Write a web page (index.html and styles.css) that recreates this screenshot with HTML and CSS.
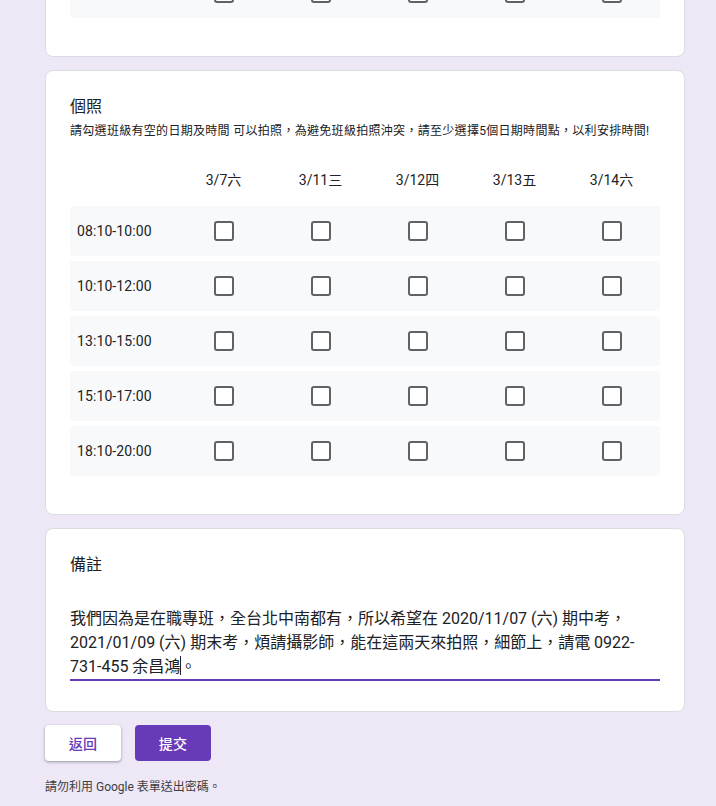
FILE: index.html
```html
<!DOCTYPE html>
<html lang="zh-Hant">
<head>
<meta charset="utf-8">
<title>表單</title>
<link rel="stylesheet" href="styles.css">
</head>
<body>
<div class="page">
  <div class="card card-prev">
    <div class="grid">
      <div class="row">
        <div class="row-label"></div>
        <div class="cell"><span class="cb"></span></div>
        <div class="cell"><span class="cb"></span></div>
        <div class="cell"><span class="cb"></span></div>
        <div class="cell"><span class="cb"></span></div>
        <div class="cell"><span class="cb"></span></div>
      </div>
    </div>
  </div>

  <div class="card">
    <div class="q-title">個照</div>
    <div class="q-desc">請勾選班級有空的日期及時間 可以拍照，為避免班級拍照沖突，請至少選擇5個日期時間點，以利安排時間!</div>
    <div class="grid">
      <div class="head">
        <div class="row-label"></div>
        <div class="col-label">3/7六</div>
        <div class="col-label">3/11三</div>
        <div class="col-label">3/12四</div>
        <div class="col-label">3/13五</div>
        <div class="col-label">3/14六</div>
      </div>
      <div class="row">
        <div class="row-label">08:10-10:00</div>
        <div class="cell"><span class="cb"></span></div>
        <div class="cell"><span class="cb"></span></div>
        <div class="cell"><span class="cb"></span></div>
        <div class="cell"><span class="cb"></span></div>
        <div class="cell"><span class="cb"></span></div>
      </div>
      <div class="row">
        <div class="row-label">10:10-12:00</div>
        <div class="cell"><span class="cb"></span></div>
        <div class="cell"><span class="cb"></span></div>
        <div class="cell"><span class="cb"></span></div>
        <div class="cell"><span class="cb"></span></div>
        <div class="cell"><span class="cb"></span></div>
      </div>
      <div class="row">
        <div class="row-label">13:10-15:00</div>
        <div class="cell"><span class="cb"></span></div>
        <div class="cell"><span class="cb"></span></div>
        <div class="cell"><span class="cb"></span></div>
        <div class="cell"><span class="cb"></span></div>
        <div class="cell"><span class="cb"></span></div>
      </div>
      <div class="row">
        <div class="row-label">15:10-17:00</div>
        <div class="cell"><span class="cb"></span></div>
        <div class="cell"><span class="cb"></span></div>
        <div class="cell"><span class="cb"></span></div>
        <div class="cell"><span class="cb"></span></div>
        <div class="cell"><span class="cb"></span></div>
      </div>
      <div class="row">
        <div class="row-label">18:10-20:00</div>
        <div class="cell"><span class="cb"></span></div>
        <div class="cell"><span class="cb"></span></div>
        <div class="cell"><span class="cb"></span></div>
        <div class="cell"><span class="cb"></span></div>
        <div class="cell"><span class="cb"></span></div>
      </div>
    </div>
  </div>

  <div class="card">
    <div class="q-title">備註</div>
    <div class="answer">我們因為是在職專班，全台北中南都有，所以希望在 2020/11/07 (六) 期中考，<br>2021/01/09 (六) 期末考，煩請攝影師，能在這兩天來拍照，細節上，請電 0922-<br>731-455 余昌鴻<span class="caret"></span>。</div>
  </div>

  <div class="actions">
    <button class="btn btn-back">返回</button>
    <button class="btn btn-submit">提交</button>
  </div>
  <div class="footer-note">請勿利用 Google 表單送出密碼。</div>
</div>
</body>
</html>
```

FILE: styles.css
```css
html, body {
  margin: 0;
  padding: 0;
  background: #ede7f6;
  font-family: Roboto, "Noto Sans CJK TC", sans-serif;
  color: #202124;
  overflow: hidden;
}

.page {
  width: 640px;
  margin-left: 45px;
}

.card {
  background: #fff;
  border: 1px solid #dadce0;
  border-radius: 8px;
  padding: 24px 24px 24px;
  margin-bottom: 13px;
}

.card-prev {
  margin-top: -57px;
}

.q-title {
  font-size: 16px;
  line-height: 24px;
  letter-spacing: 0.1px;
}

.q-desc {
  font-size: 12px;
  line-height: 18px;
  margin-top: 3px;
  letter-spacing: 0.3px;
  white-space: nowrap;
}

.grid {
  margin-bottom: 14px;
}

.head,
.row {
  display: grid;
  grid-template-columns: 105px repeat(5, 97px);
  align-items: center;
}

.head {
  padding: 28px 0 14px;
  line-height: 24px;
}

.col-label {
  text-align: center;
  font-size: 14px;
}

.row {
  height: 50px;
  background: #f8f9fa;
  border-radius: 3px;
  margin-bottom: 5px;
}

.row:last-child {
  margin-bottom: 0;
}

.row-label {
  font-size: 14px;
  padding-left: 7px;
  letter-spacing: 0.1px;
}

.cell {
  display: flex;
  justify-content: center;
  align-items: center;
  padding-bottom: 1px;
}

.cb {
  box-sizing: border-box;
  width: 20px;
  height: 20px;
  border: 2px solid #5f6368;
  border-radius: 3px;
  background: #fff;
}

.answer {
  margin-top: 30px;
  font-size: 16px;
  line-height: 24px;
  border-bottom: 2px solid #673ab7;
  margin-bottom: 6px;
}

.caret {
  display: inline-block;
  width: 1px;
  height: 19px;
  background: #202124;
  vertical-align: -3px;
  margin-right: -1px;
}

.actions {
  display: flex;
  gap: 14px;
  margin-top: 12px;
}

.btn {
  width: 76px;
  height: 36px;
  border: none;
  border-radius: 4px;
  font-family: Roboto, "Noto Sans CJK TC", sans-serif;
  font-size: 14px;
  font-weight: 500;
  letter-spacing: 0.25px;
  cursor: pointer;
}

.btn-back {
  background: #fff;
  color: #673ab7;
  box-shadow: 0 1px 2px rgba(60, 64, 67, 0.3), 0 1px 3px 1px rgba(60, 64, 67, 0.15);
}

.btn-submit {
  background: #673ab7;
  color: #fff;
}

.footer-note {
  margin-top: 18px;
  font-size: 12px;
  line-height: 16px;
  color: #3c4043;
}
```
